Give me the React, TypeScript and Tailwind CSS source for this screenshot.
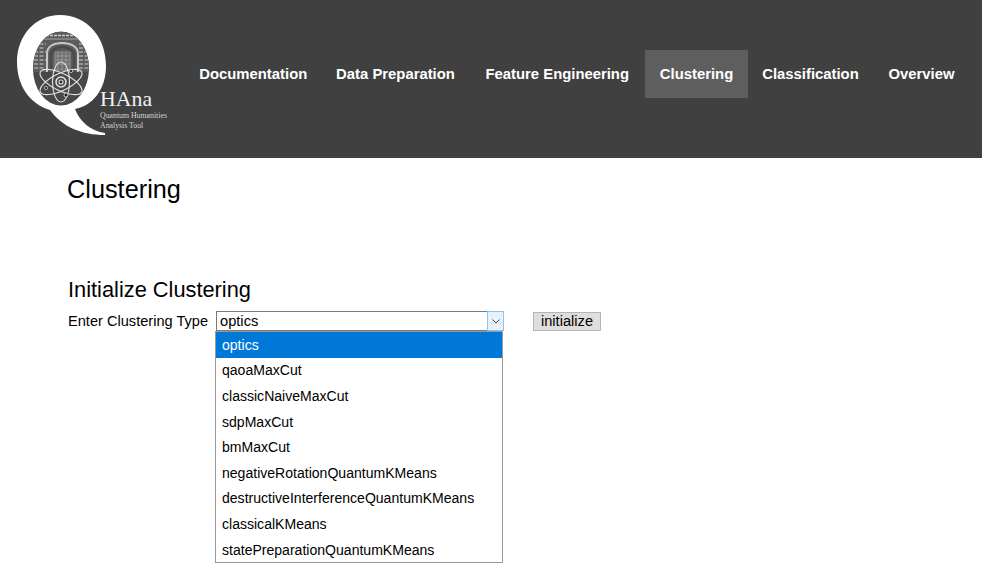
import React from "react";

const font = { fontFamily: '"Liberation Sans", Arial, sans-serif' };

function Logo() {
  return (
    <div className="relative w-[185px] h-[158px] shrink-0">
      <svg width="185" height="158" viewBox="0 0 185 158" className="block">
        <defs>
          <clipPath id="inner">
            <ellipse cx="61" cy="68.5" rx="28" ry="37" />
          </clipPath>
        </defs>
        <path
          d="M60 15 C87 15 106 37 106 66 C106 90 92 106 75 109 C80 122 91 131 105 133 L105 135 C82 135 62 127 50 110 C30 104 17 86 17 62 C17 36 35 15 60 15 Z"
          fill="#fff"
        />
        <ellipse cx="61" cy="68.5" rx="28" ry="37" fill="#484848" />
        <g clipPath="url(#inner)">
          <rect x="33" y="32" width="56" height="40" fill="#5c5c5c" />
          <g fill="none">
            <path d="M38 35.5 H86" stroke="#cfcfcf" strokeWidth="1.5" strokeDasharray="3 1" />
            <path d="M37 39 H87" stroke="#8f8f8f" strokeWidth="1.5" />
            <path d="M34 44 H46 M34 48 H45 M34 52 H46 M34 56 H45 M34 60 H46 M34 64 H45 M34 68 H44 M79 44 H90 M79 48 H90 M79 52 H90 M79 56 H90 M79 60 H90 M79 64 H90 M79 68 H90" stroke="#a8a8a8" strokeWidth="1.3" strokeDasharray="4 1.5" />
            <path d="M47 72 V54 C47 46 54 43 62 43 C70 43 78 46 78 54 V72" stroke="#c9c9c9" strokeWidth="2" />
            <path d="M51 71 V55 C51 50 56 47 62 47 C68 47 74 50 74 55 V71" stroke="#4a4a4a" strokeWidth="2.5" />
            <path d="M55 52 H70 V70 H55 Z" fill="#6f6f6f" stroke="#8c8c8c" />
            <path d="M58 52 V70 M62 52 V70 M66 52 V70 M55 56 H70 M55 60 H70 M55 64 H70" stroke="#a0a0a0" strokeWidth="0.8" />
          </g>
          <g stroke="#e4e4e4" strokeWidth="1.1" fill="none">
            <ellipse cx="61" cy="82" rx="8.5" ry="20" />
            <ellipse cx="61" cy="82" rx="8.5" ry="23" transform="rotate(64 61 82)" />
            <ellipse cx="61" cy="82" rx="8.5" ry="23" transform="rotate(-64 61 82)" />
            <circle cx="61" cy="82" r="5" strokeWidth="1.5" />
            <circle cx="61" cy="82" r="2" fill="#222" />
          </g>
          <circle cx="66" cy="95" r="2" fill="#222" stroke="#e4e4e4" strokeWidth="0.8" />
          <circle cx="46" cy="88" r="1.6" fill="#222" stroke="#e4e4e4" strokeWidth="0.7" />
          <circle cx="71" cy="71" r="1.6" fill="#222" stroke="#e4e4e4" strokeWidth="0.7" />
        </g>
      </svg>
      <div className="absolute left-[100px] top-[89px] text-[21.8px] leading-[20px] text-[#f0f0f0]" style={{ fontFamily: '"Liberation Serif", serif' }}>
        HAna
      </div>
      <div className="absolute left-[100px] top-[111px] text-[7.8px] leading-[9.5px] text-[#d4d4d4] whitespace-nowrap" style={{ fontFamily: '"Liberation Serif", serif' }}>
        Quantum Humanities
        <br />
        Analysis Tool
      </div>
    </div>
  );
}

const nav = [
  { t: "Documentation", w: "w-[136.5px]" },
  { t: "Data Preparation", w: "w-[148px]" },
  { t: "Feature Engineering", w: "w-[175.5px]" },
  { t: "Clustering", w: "w-[103px]" },
  { t: "Classification", w: "w-[125px]" },
  { t: "Overview", w: "w-[97px]" },
];
const options = [
  "optics",
  "qaoaMaxCut",
  "classicNaiveMaxCut",
  "sdpMaxCut",
  "bmMaxCut",
  "negativeRotationQuantumKMeans",
  "destructiveInterferenceQuantumKMeans",
  "classicalKMeans",
  "statePreparationQuantumKMeans",
];

export default function App() {
  return (
    <div className="w-[982px] h-[569px] overflow-hidden bg-white text-black" style={font}>
      <header className="h-[158px] bg-[#404040] flex items-start">
        <Logo />
        <nav className="flex mt-[50px]">
          {nav.map((n) => (
            <a
              key={n.t}
              className={
                n.w +
                " h-12 flex items-center justify-center text-[14.85px] font-bold text-white whitespace-nowrap " +
                (n.t === "Clustering" ? "bg-[#5e5e5e]" : "")
              }
            >
              {n.t}
            </a>
          ))}
        </nav>
      </header>
      <main className="pl-[67px]">
        <h1 className="text-[25.3px] leading-7 mt-[17px]">Clustering</h1>
        <h2 className="text-[21.8px] leading-[26px] mt-[74px] ml-px">Initialize Clustering</h2>
        <div className="flex items-start ml-px mt-[8px]">
          <label className="text-[14.6px] leading-5 w-[148px] whitespace-nowrap">Enter Clustering Type</label>
          <div className="relative w-[288px] h-5">
            <div className="h-5 border-y border-l border-[#7a7a7a] flex items-stretch bg-white">
              <span className="flex-1 pl-[3px] text-[14.67px] leading-[18px]">optics</span>
              <span className="w-[17px] -my-px bg-[#e5f1fb] border border-[#8fc3ee] flex items-center justify-center">
                <svg width="8" height="5" viewBox="0 0 8 5">
                  <path d="M0.5 0.5 L4 4 L7.5 0.5" fill="none" stroke="#444" strokeWidth="1" />
                </svg>
              </span>
            </div>
            <ul className="absolute left-[-1px] top-5 w-[288px] h-[232px] border border-[#9a9a9a] bg-white z-10">
              {options.map((o) => (
                <li
                  key={o}
                  className={
                    "h-[25.6px] pl-[6px] pt-[1px] flex items-center text-[14.05px] whitespace-nowrap " +
                    (o === "optics" ? "bg-[#0078d7] text-white" : "text-black")
                  }
                >
                  {o}
                </li>
              ))}
            </ul>
          </div>
          <button className="ml-[29px] mt-px w-[68px] h-[19px] bg-[#dedede] border border-[#b5b5b5] text-[14.67px] leading-[17px] text-center">
            initialize
          </button>
        </div>
      </main>
    </div>
  );
}
